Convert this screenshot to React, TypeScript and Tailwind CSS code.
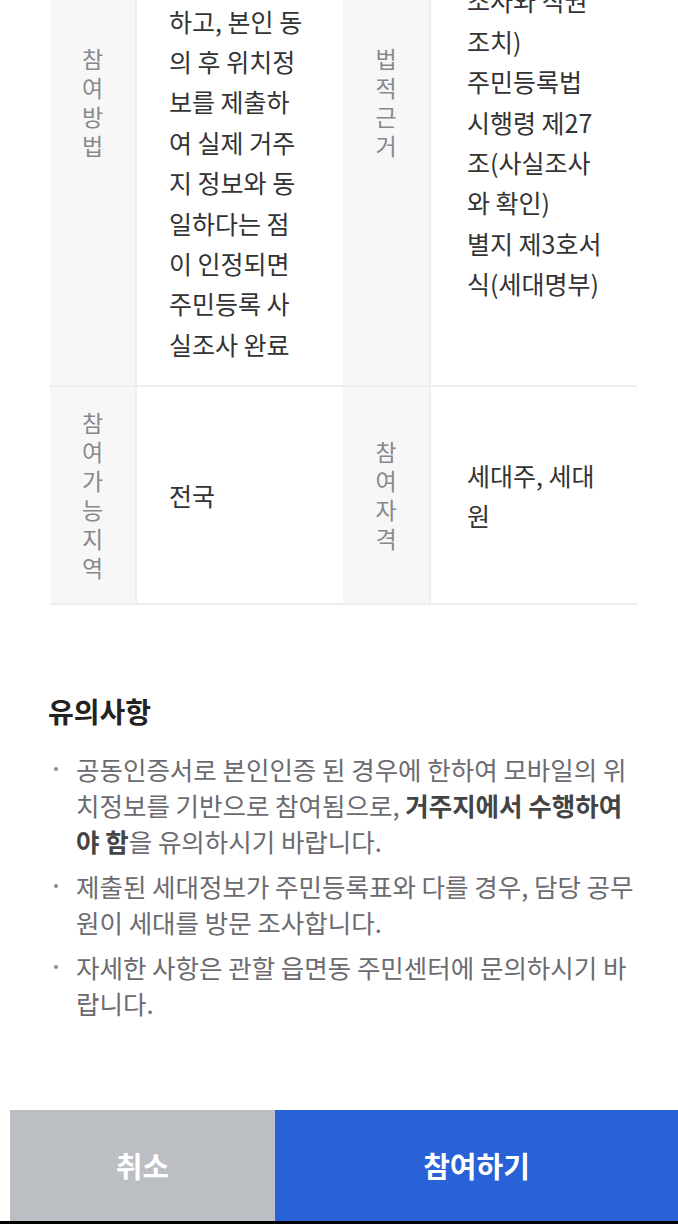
import type { ReactNode } from 'react';

const FONT = { fontFamily: '"Noto Sans CJK KR", "Noto Sans", sans-serif' };

interface Row {
  label: string;
  value: string[];
  label2: string;
  value2: string[];
}

const ROWS: Row[] = [
  {
    label: '참여방법',
    value: [
      '정부24 앱에',
      '서 공동인증',
      '서로 본인인',
      '증을',
      '하고, 본인 동',
      '의 후 위치정',
      '보를 제출하',
      '여 실제 거주',
      '지 정보와 동',
      '일하다는 점',
      '이 인정되면',
      '주민등록 사',
      '실조사 완료',
    ],
    label2: '법적근거',
    value2: [
      '주민등록법',
      '제20조(사실',
      '조사와 직권',
      '조치)',
      '주민등록법',
      '시행령 제27',
      '조(사실조사',
      '와 확인)',
      '별지 제3호서',
      '식(세대명부)',
    ],
  },
  {
    label: '참여가능지역',
    value: ['전국'],
    label2: '참여자격',
    value2: ['세대주, 세대', '원'],
  },
];

function HeadCell({ text }: { text: string }) {
  return (
    <div className="flex items-center justify-center border-r-2 border-b-2 border-[#eeeef1] bg-[#f7f7f8] py-[21px]">
      <div className="flex flex-col items-center text-[23px] leading-[29px] text-[#88888d]">
        {text.split('').map((c, i) => (
          <span key={i}>{c}</span>
        ))}
      </div>
    </div>
  );
}

function ValueCell({ lines, pad }: { lines: string[]; pad: string }) {
  return (
    <div className={`flex items-center border-b-2 border-[#eeeef1] bg-white py-[21px] ${pad}`}>
      <div className="flex flex-col text-[25px] leading-[40.4px] whitespace-nowrap text-[#333]">
        {lines.map((l, i) => (
          <span key={i}>{l}</span>
        ))}
      </div>
    </div>
  );
}

function Note({ children }: { children: ReactNode }) {
  return (
    <li className="flex text-[25.5px] leading-[36px] text-[#6b6b70]">
      <span className="flex h-[36px] w-[28px] shrink-0 items-center pl-[6px]">
        <span className="h-[4px] w-[4px] rounded-full bg-[#8a8a8f]" />
      </span>
      <p className="whitespace-nowrap">{children}</p>
    </li>
  );
}

export default function App() {
  return (
    <div className="flex h-[1224px] flex-col overflow-hidden bg-white" style={FONT}>
      <div className="-mt-[182px] ml-[50px] grid w-[587px] grid-cols-[87px_206px_88px_206px]">
        {ROWS.map((r) => (
          <div key={r.label} className="contents">
            <HeadCell text={r.label} />
            <ValueCell lines={r.value} pad="pl-[32px]" />
            <HeadCell text={r.label2} />
            <ValueCell lines={r.value2} pad="pl-[36px]" />
          </div>
        ))}
      </div>

      <section className="mt-[88px] pl-[48px]">
        <h2 className="text-[28px] leading-[36px] font-bold text-[#222]">유의사항</h2>
        <ul className="mt-[22px] flex flex-col gap-[9px]">
          <Note>
            공동인증서로 본인인증 된 경우에 한하여 모바일의 위
            <br />
            치정보를 기반으로 참여됨으로, <b className="font-bold text-[#444]">거주지에서 수행하여</b>
            <br />
            <b className="font-bold text-[#444]">야 함</b>을 유의하시기 바랍니다.
          </Note>
          <Note>
            제출된 세대정보가 주민등록표와 다를 경우, 담당 공무
            <br />
            원이 세대를 방문 조사합니다.
          </Note>
          <Note>
            자세한 사항은 관할 읍면동 주민센터에 문의하시기 바
            <br />
            랍니다.
          </Note>
        </ul>
      </section>

      <div className="mt-auto ml-[10px] flex h-[111px] text-[29px] font-bold text-white">
        <button className="flex w-[265px] items-center justify-center bg-[#bbbec3]">취소</button>
        <button className="flex flex-1 items-center justify-center bg-[#2962d6]">참여하기</button>
      </div>
      <div className="h-[3px] bg-black" />
    </div>
  );
}
